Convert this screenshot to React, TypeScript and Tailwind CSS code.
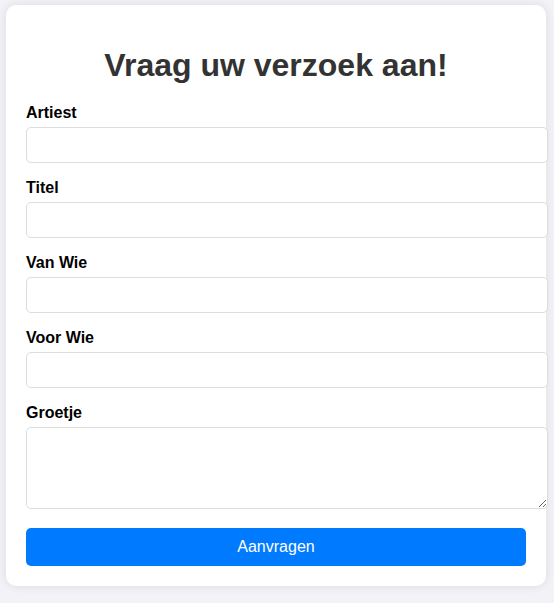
import React from 'react';

const fields = ['Artiest', 'Titel', 'Van Wie', 'Voor Wie'];

export default function App() {
  return (
    <div className="min-h-[603px] bg-[#f2f2f7] pt-[5px] pl-[6px] font-['Liberation_Sans',Arial,sans-serif]">
      <div className="w-[540px] rounded-[10px] bg-white px-[20px] pt-[20px] pb-[20px] shadow-[0_0_10px_rgba(0,0,0,0.1)]">
        <h1 className="mt-[22px] mb-[19px] text-center text-[32px] font-bold leading-[37px] text-[#333]">
          Vraag uw verzoek aan!
        </h1>
        <form onSubmit={(e) => e.preventDefault()}>
          {fields.map((f) => (
            <div key={f}>
              <label className="mb-[5px] block text-[16px] font-bold leading-[19px] text-black">{f}</label>
              <input
                type="text"
                className="mb-[15px] box-border block h-[36px] w-[522px] rounded-[5px] border border-[#ddd] bg-white px-[10px] text-[16px] outline-none"
              />
            </div>
          ))}
          <label className="mb-[5px] block text-[16px] font-bold leading-[19px] text-black">Groetje</label>
          <textarea className="mb-[19px] box-border block h-[82px] w-[522px] rounded-[5px] border border-[#ddd] bg-white p-[10px] text-[16px] outline-none" />
          <button
            type="submit"
            className="block h-[38px] w-full rounded-[5px] bg-[#007bff] text-[16px] text-white"
          >
            Aanvragen
          </button>
        </form>
      </div>
    </div>
  );
}
